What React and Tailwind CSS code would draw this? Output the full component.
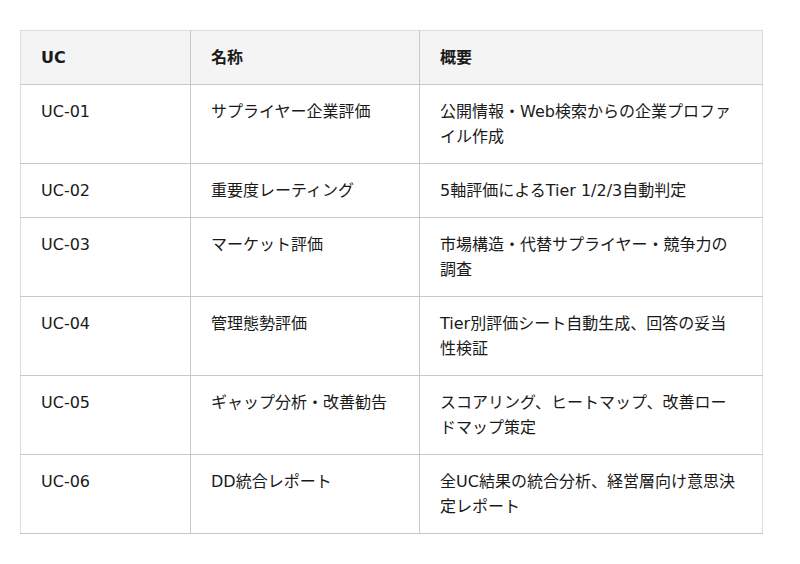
import React from "react";

const rows = [
  ["UC-01", "サプライヤー企業評価", "公開情報・Web検索からの企業プロファイル作成"],
  ["UC-02", "重要度レーティング", "5軸評価によるTier 1/2/3自動判定"],
  ["UC-03", "マーケット評価", "市場構造・代替サプライヤー・競争力の調査"],
  ["UC-04", "管理態勢評価", "Tier別評価シート自動生成、回答の妥当性検証"],
  ["UC-05", "ギャップ分析・改善勧告", "スコアリング、ヒートマップ、改善ロードマップ策定"],
  ["UC-06", "DD統合レポート", "全UC結果の統合分析、経営層向け意思決定レポート"],
];

const font = "font-['DejaVu_Sans','Noto_Sans_CJK_JP',sans-serif]";

export default function App() {
  return (
    <div className={`w-[800px] h-[564px] bg-white pt-[30px] pl-[20px] ${font}`}>
      <table className="w-[742px] border-collapse border border-[#dcdcdc] text-[16px] leading-[25px] text-[#1a1a1a] table-fixed">
        <colgroup>
          <col className="w-[170px]" />
          <col className="w-[229px]" />
          <col className="w-[343px]" />
        </colgroup>
        <thead>
          <tr className="bg-[#f4f4f4]">
            <th className="text-left font-bold px-[20px] py-[14px] border border-[#c8c8c8] border-t-[#dcdcdc] border-l-[#dcdcdc]">UC</th>
            <th className="text-left font-bold px-[20px] py-[14px] border border-[#c8c8c8] border-t-[#dcdcdc]">名称</th>
            <th className="text-left font-bold px-[20px] py-[14px] border border-[#c8c8c8] border-t-[#dcdcdc] border-r-[#dcdcdc]">概要</th>
          </tr>
        </thead>
        <tbody>
          {rows.map((r, i) => (
            <tr key={i}>
              <td className="align-top px-[20px] py-[14px] border border-[#c8c8c8] border-l-[#dcdcdc]">{r[0]}</td>
              <td className="align-top px-[20px] py-[14px] border border-[#c8c8c8]">{r[1]}</td>
              <td className="align-top px-[20px] py-[14px] border border-[#c8c8c8] border-r-[#dcdcdc]">{r[2]}</td>
            </tr>
          ))}
        </tbody>
      </table>
    </div>
  );
}
